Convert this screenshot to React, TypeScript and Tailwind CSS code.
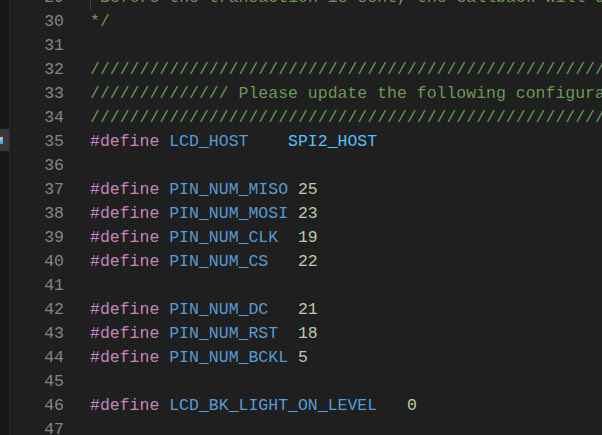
import React from "react";

type Tok = { t: string; c: string };

const CM = "text-[#6a9955]";
const KW = "text-[#c586c0]";
const MC = "text-[#569cd6]";
const CN = "text-[#4fc1ff]";
const NU = "text-[#b5cea8]";
const PL = "text-[#cccccc]";

const slashes = "/".repeat(80);

const def = (name: string, pad: string, val: string, valCls: string): Tok[] => [
  { t: "#define", c: KW },
  { t: " ", c: PL },
  { t: name, c: MC },
  { t: pad, c: PL },
  { t: val, c: valCls },
];

const lines: { n: number; toks: Tok[]; guide?: boolean }[] = [
  { n: 29, toks: [{ t: "Before the transaction is sent, the callback will set this line to the correct state.", c: CM }], guide: true },
  { n: 30, toks: [{ t: "*/", c: CM }] },
  { n: 31, toks: [] },
  { n: 32, toks: [{ t: slashes, c: CM }] },
  { n: 33, toks: [{ t: "////////////// Please update the following configuration according to your LCD //////////////", c: CM }] },
  { n: 34, toks: [{ t: slashes, c: CM }] },
  { n: 35, toks: def("LCD_HOST", "    ", "SPI2_HOST", CN) },
  { n: 36, toks: [] },
  { n: 37, toks: def("PIN_NUM_MISO", " ", "25", NU) },
  { n: 38, toks: def("PIN_NUM_MOSI", " ", "23", NU) },
  { n: 39, toks: def("PIN_NUM_CLK", "  ", "19", NU) },
  { n: 40, toks: def("PIN_NUM_CS", "   ", "22", NU) },
  { n: 41, toks: [] },
  { n: 42, toks: def("PIN_NUM_DC", "   ", "21", NU) },
  { n: 43, toks: def("PIN_NUM_RST", "  ", "18", NU) },
  { n: 44, toks: def("PIN_NUM_BCKL", " ", "5", NU) },
  { n: 45, toks: [] },
  { n: 46, toks: def("LCD_BK_LIGHT_ON_LEVEL", "   ", "0", NU) },
  { n: 47, toks: [] },
];

export default function App() {
  return (
    <div
      className="flex h-[435px] w-[602px] overflow-hidden bg-[#1f1f1f]"
      style={{ fontFamily: "'Liberation Mono', 'DejaVu Sans Mono', monospace" }}
    >
      <div className="flex w-[10px] shrink-0 flex-col border-r border-[#2b2b2b] bg-[#181818]">
        <div className="mt-[129px] flex h-[22px] items-center bg-[#37373d]">
          <div className="h-[7px] w-[3px] bg-gradient-to-b from-[#d7ba7d] via-[#4fc1ff] to-[#519aba]" />
        </div>
      </div>
      <div className="flex min-w-0 flex-1 flex-col pt-0 -mt-[14.5px]">
        {lines.map((l) => (
          <div key={l.n} className="flex h-[24px] shrink-0 items-center text-[16.5px] leading-[24px]">
            <div className="w-[54px] shrink-0 pr-0 text-right text-[#858585]">{l.n}</div>
            <div className="ml-[26px] flex min-w-0 flex-1 whitespace-pre">
              {l.guide && <span className="h-[24px] w-[10px] shrink-0 border-l border-[#404040]" />}
              {l.toks.map((tk, i) => (
                <span key={i} className={tk.c}>
                  {tk.t}
                </span>
              ))}
            </div>
          </div>
        ))}
      </div>
    </div>
  );
}
